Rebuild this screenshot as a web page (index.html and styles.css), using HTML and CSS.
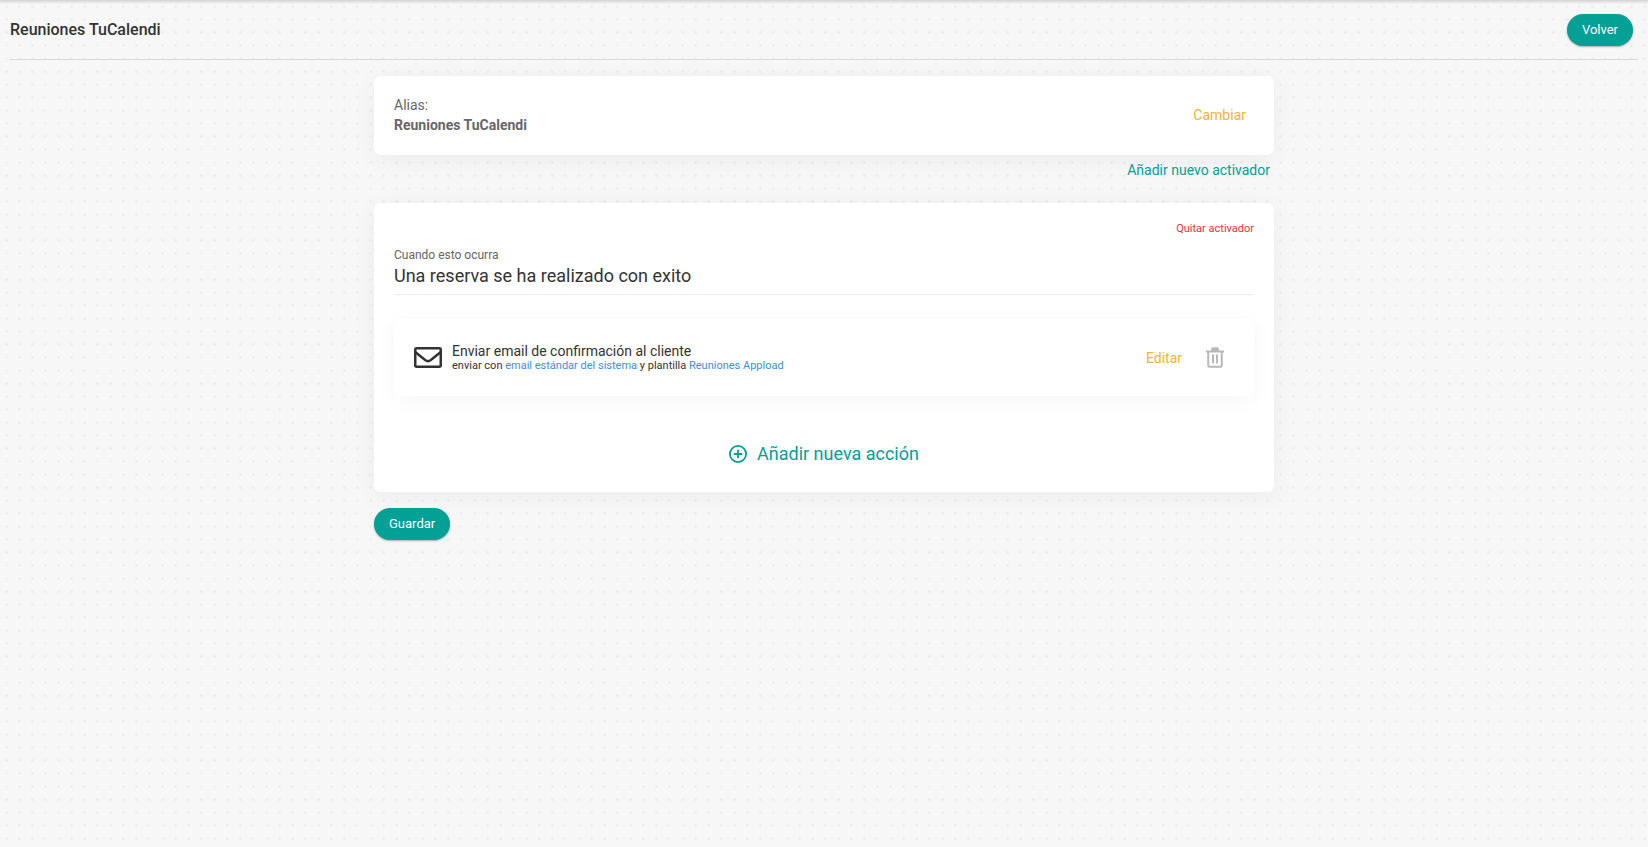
FILE: index.html
```html
<!DOCTYPE html>
<html lang="es">
<head>
<meta charset="utf-8">
<title>Reuniones TuCalendi</title>
<link rel="stylesheet" href="styles.css">
</head>
<body>
<header class="topbar">
  <h1 class="topbar-title">Reuniones TuCalendi</h1>
  <button class="btn" type="button">Volver</button>
</header>
<main class="content">
  <section class="card alias-card">
    <div>
      <div>Alias:</div>
      <strong>Reuniones TuCalendi</strong>
    </div>
    <button class="text-btn amber change-btn" type="button">Cambiar</button>
  </section>
  <div class="add-trigger">
    <button class="text-btn teal" type="button">Añadir nuevo activador</button>
  </div>
  <section class="card trigger-card">
    <div class="remove-row">
      <button class="text-btn red" type="button">Quitar activador</button>
    </div>
    <div class="trigger-label">Cuando esto ocurra</div>
    <h2 class="trigger-name">Una reserva se ha realizado con exito</h2>
    <div class="card action-card">
      <svg class="mail-icon" viewBox="0 0 28 21" aria-hidden="true">
        <rect x="1.25" y="1.25" width="25.5" height="18.5" rx="1.5"/>
        <path d="M1.5 5.2L11.5 13.2Q14 15 16.5 13.2L26.5 5.2"/>
      </svg>
      <div class="action-text">
        <div class="action-title">Enviar email de confirmación al cliente</div>
        <div class="action-detail">enviar con <a href="#">email estándar del sistema</a> y plantilla <a href="#">Reuniones Appload</a></div>
      </div>
      <button class="text-btn amber" type="button">Editar</button>
      <button class="text-btn trash-btn" type="button" aria-label="Eliminar">
        <svg class="trash-icon" viewBox="0 0 18 21" aria-hidden="true">
          <path class="trash-lid" d="M5 4V2Q5.500 .3 7 .3H11Q12.500 .3 13 2V4Z"/>
          <path d="M0 4.500H18M2.250 4.500V18.500Q2.250 19.750 3.500 19.750H14.500Q15.750 19.750 15.750 18.500V4.500M7 7.500V16.500M11 7.500V16.500"/>
        </svg>
      </button>
    </div>
    <div class="add-action">
      <button class="text-btn teal add-action-btn" type="button">
        <svg class="plus-icon" viewBox="0 0 18 18" aria-hidden="true">
          <circle cx="9" cy="9" r="8.100"/>
          <path d="M9 4.800V13.200M4.800 9H13.200"/>
        </svg>
        Añadir nueva acción
      </button>
    </div>
  </section>
  <button class="btn" type="button">Guardar</button>
</main>
</body>
</html>
```
FILE: styles.css
```css
* {
  box-sizing: border-box;
}

body {
  margin: 0;
  min-height: 100vh;
  padding: 0 10px 40px;
  font-family: Roboto, "Liberation Sans", sans-serif;
  font-size: 14px;
  line-height: 20px;
  color: #333;
  background:
    linear-gradient(#d2d2d2, #f7f7f700) 0 0 / 100% 4px no-repeat,
    radial-gradient(circle, #efefef 1px, transparent 2px) 0 0 / 13px 13px,
    #f7f7f7;
}

button {
  font: inherit;
  cursor: pointer;
}

.topbar {
  display: flex;
  align-items: center;
  justify-content: space-between;
  height: 60px;
  padding: 0 5px 0 0;
  border-bottom: 1px solid #dadada;
}

.topbar-title {
  margin: 0;
  font-size: 16px;
  font-weight: 500;
}

.btn {
  height: 32px;
  padding: 0 15px;
  border: 0;
  border-radius: 16px;
  background: #03a096;
  color: #fff;
  font-size: 13px;
  font-weight: 400;
  box-shadow: 0 1px 2px #0000004d;
}

.content {
  max-width: 900px;
  margin: 16px auto 0;
}

.card {
  border-radius: 7px;
  background: #fff;
  box-shadow: 0 4px 25px #0000000d;
}

.alias-card {
  display: flex;
  align-items: center;
  justify-content: space-between;
  padding: 19px 20px 20px;
  color: #666;
}

.text-btn {
  padding: 0;
  border: 0;
  background: none;
}

.amber {
  color: #f5b335;
}

.teal {
  color: #03a096;
}

.red {
  color: #e7323b;
}

.change-btn {
  margin-right: 8px;
}

.add-trigger {
  padding: 5px 4px 23px;
  text-align: right;
}

.trigger-card {
  margin-bottom: 16px;
  padding: 16px 20px 24px;
}

.remove-row {
  text-align: right;
  font-size: 11px;
}

.trigger-label {
  margin-top: 7px;
  font-size: 12px;
  line-height: 18px;
  color: #666;
}

.trigger-name {
  margin: 0 0 24px;
  padding-bottom: 6px;
  border-bottom: 1px solid #ececec;
  font-size: 18px;
  font-weight: 400;
  line-height: 24px;
}

.action-card {
  display: flex;
  align-items: center;
  padding: 24px 30px 24px 20px;
  box-shadow: 0 4px 25px #0000000a;
}

.mail-icon {
  width: 28px;
  height: 21px;
  fill: none;
  stroke: #333;
  stroke-width: 2.500;
}

.action-text {
  flex: 1;
  margin-left: 10px;
}

.action-title {
  line-height: 16px;
}

.action-detail {
  font-size: 11px;
  line-height: 13px;
}

.action-detail a {
  color: #3b8eea;
  text-decoration: none;
}

.trash-btn {
  display: flex;
  margin-left: 24px;
}

.trash-icon {
  width: 18px;
  height: 21px;
  fill: none;
  stroke: #b8b8b8;
  stroke-width: 2;
}

.trash-lid {
  fill: #b8b8b8;
  stroke: none;
}

.add-action {
  display: flex;
  justify-content: center;
  margin-top: 44px;
}

.add-action-btn {
  display: flex;
  align-items: center;
  gap: 10px;
  font-size: 18px;
  line-height: 28px;
}

.plus-icon {
  width: 18px;
  height: 18px;
  fill: none;
  stroke: #03a096;
  stroke-width: 1.800;
}
```
